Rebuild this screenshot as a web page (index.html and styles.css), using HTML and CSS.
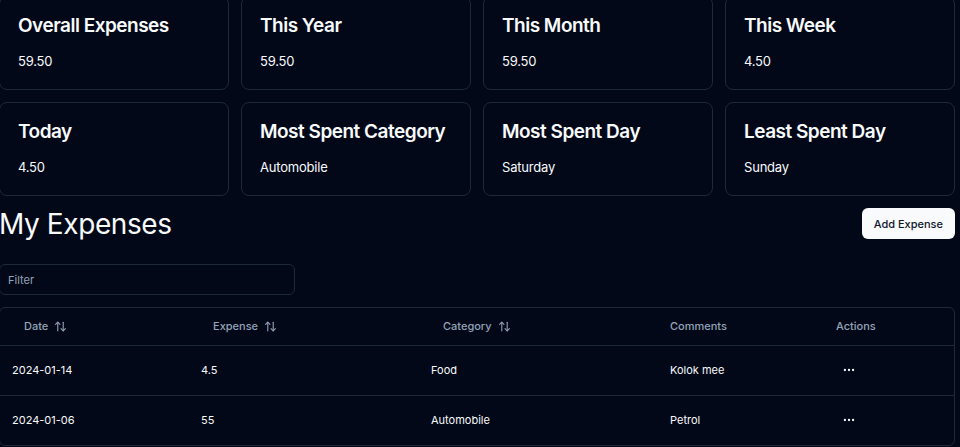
FILE: index.html
```html
<!DOCTYPE html>
<html lang="en">
<head>
<meta charset="utf-8">
<title>My Expenses</title>
<link rel="stylesheet" href="styles.css">
</head>
<body>
<div class="page">
  <div class="cards">
    <div class="card"><div class="card-title">Overall Expenses</div><div class="card-value">59.50</div></div>
    <div class="card"><div class="card-title">This Year</div><div class="card-value">59.50</div></div>
    <div class="card"><div class="card-title">This Month</div><div class="card-value">59.50</div></div>
    <div class="card"><div class="card-title">This Week</div><div class="card-value">4.50</div></div>
    <div class="card"><div class="card-title">Today</div><div class="card-value">4.50</div></div>
    <div class="card"><div class="card-title">Most Spent Category</div><div class="card-value">Automobile</div></div>
    <div class="card"><div class="card-title">Most Spent Day</div><div class="card-value">Saturday</div></div>
    <div class="card"><div class="card-title">Least Spent Day</div><div class="card-value">Sunday</div></div>
  </div>

  <div class="head-row">
    <h1 class="heading">My Expenses</h1>
    <button class="btn-primary" type="button">Add Expense</button>
  </div>

  <div class="filter-row">
    <input class="filter" type="text" placeholder="Filter">
  </div>

  <div class="table-wrap">
    <table class="table">
      <colgroup>
        <col class="c1"><col class="c2"><col class="c3"><col class="c4"><col class="c5">
      </colgroup>
      <thead>
        <tr>
          <th><button class="sort-btn" type="button">Date<svg class="sort-icon" viewBox="0 0 24 24" fill="none" stroke="currentColor" stroke-width="2" stroke-linecap="round" stroke-linejoin="round"><path d="m21 16-4 4-4-4"/><path d="M17 20V4"/><path d="m3 8 4-4 4 4"/><path d="M7 4v16"/></svg></button></th>
          <th><button class="sort-btn" type="button">Expense<svg class="sort-icon" viewBox="0 0 24 24" fill="none" stroke="currentColor" stroke-width="2" stroke-linecap="round" stroke-linejoin="round"><path d="m21 16-4 4-4-4"/><path d="M17 20V4"/><path d="m3 8 4-4 4 4"/><path d="M7 4v16"/></svg></button></th>
          <th><button class="sort-btn" type="button">Category<svg class="sort-icon" viewBox="0 0 24 24" fill="none" stroke="currentColor" stroke-width="2" stroke-linecap="round" stroke-linejoin="round"><path d="m21 16-4 4-4-4"/><path d="M17 20V4"/><path d="m3 8 4-4 4 4"/><path d="M7 4v16"/></svg></button></th>
          <th class="plain">Comments</th>
          <th class="plain">Actions</th>
        </tr>
      </thead>
      <tbody>
        <tr>
          <td>2024-01-14</td>
          <td>4.5</td>
          <td>Food</td>
          <td>Kolok mee</td>
          <td><button class="icon-btn" type="button" aria-label="Actions"><svg class="more-icon" viewBox="0 0 24 24" fill="none" stroke="currentColor" stroke-width="2" stroke-linecap="round" stroke-linejoin="round"><circle cx="12" cy="12" r="1"/><circle cx="19" cy="12" r="1"/><circle cx="5" cy="12" r="1"/></svg></button></td>
        </tr>
        <tr>
          <td>2024-01-06</td>
          <td>55</td>
          <td>Automobile</td>
          <td>Petrol</td>
          <td><button class="icon-btn" type="button" aria-label="Actions"><svg class="more-icon" viewBox="0 0 24 24" fill="none" stroke="currentColor" stroke-width="2" stroke-linecap="round" stroke-linejoin="round"><circle cx="12" cy="12" r="1"/><circle cx="19" cy="12" r="1"/><circle cx="5" cy="12" r="1"/></svg></button></td>
        </tr>
      </tbody>
    </table>
  </div>
</div>
</body>
</html>
```

FILE: styles.css
```css
* {
  box-sizing: border-box;
}

html, body {
  margin: 0;
  padding: 0;
  background: #020817;
  color: #f8fafc;
  font-family: Inter, "Noto Sans", sans-serif;
  overflow: hidden;
}

.page {
  width: 956px;
  margin-left: -1px;
  margin-top: -4px;
}

.cards {
  display: grid;
  grid-template-columns: repeat(4, 1fr);
  gap: 12px;
}

.card {
  border: 1px solid #1e293b;
  border-radius: 8px;
  background: #020817;
  padding: 19px 18px 18px;
  display: flex;
  flex-direction: column;
  gap: 15px;
  height: 94px;
}

.card-title {
  font-size: 19px;
  line-height: 20px;
  font-weight: 600;
  letter-spacing: -0.5px;
  white-space: nowrap;
  color: #f8fafc;
}

.card-value {
  font-size: 13px;
  line-height: 20px;
  letter-spacing: -0.2px;
  color: #f8fafc;
}

.head-row {
  margin-top: 12px;
  display: flex;
  align-items: center;
  justify-content: space-between;
  height: 31px;
}

.heading {
  margin: 0;
  font-size: 28px;
  line-height: 32px;
  font-weight: 400;
  letter-spacing: -0.4px;
  color: #f8fafc;
}

.btn-primary {
  height: 31px;
  padding: 0 12px;
  border: none;
  border-radius: 6px;
  background: #f8fafc;
  color: #0f172a;
  font-family: Inter, "Noto Sans", sans-serif;
  font-size: 11px;
  font-weight: 500;
}

.filter-row {
  margin-top: 25px;
}

.filter {
  display: block;
  width: 296px;
  height: 31px;
  border: 1px solid #1e293b;
  border-radius: 6px;
  background: transparent;
  padding: 0 8px;
  color: #f8fafc;
  font-family: Inter, "Noto Sans", sans-serif;
  font-size: 11px;
  outline: none;
}

.filter::placeholder {
  color: #94a3b8;
}

.table-wrap {
  margin-top: 12px;
  border: 1px solid #1e293b;
  border-radius: 6px;
  overflow: hidden;
}

.table {
  width: 100%;
  border-collapse: collapse;
  table-layout: fixed;
  font-size: 11px;
}

.c1 { width: 189px; }
.c2 { width: 230px; }
.c3 { width: 239px; }
.c4 { width: 166px; }
.c5 { width: 130px; }

.table thead tr {
  height: 37px;
  border-bottom: 1px solid #1e293b;
}

.table tbody tr {
  height: 50px;
  border-bottom: 1px solid #1e293b;
}

.table tbody tr:last-child {
  border-bottom: none;
}

.table th {
  padding: 0 12px;
  text-align: left;
  font-weight: 500;
  color: #94a3b8;
  vertical-align: middle;
}

.table td {
  padding: 0 12px;
  vertical-align: middle;
  color: #f8fafc;
}

.sort-btn {
  display: inline-flex;
  align-items: center;
  height: 30px;
  padding: 0 12px;
  border: none;
  background: transparent;
  color: #94a3b8;
  font-family: Inter, "Noto Sans", sans-serif;
  font-size: 11px;
  font-weight: 500;
}

.sort-icon {
  width: 13px;
  height: 13px;
  margin-left: 6px;
}

.icon-btn {
  display: inline-flex;
  align-items: center;
  justify-content: center;
  width: 26px;
  height: 26px;
  padding: 0;
  border: none;
  background: transparent;
  color: #f8fafc;
}

.more-icon {
  width: 14px;
  height: 14px;
}
```
